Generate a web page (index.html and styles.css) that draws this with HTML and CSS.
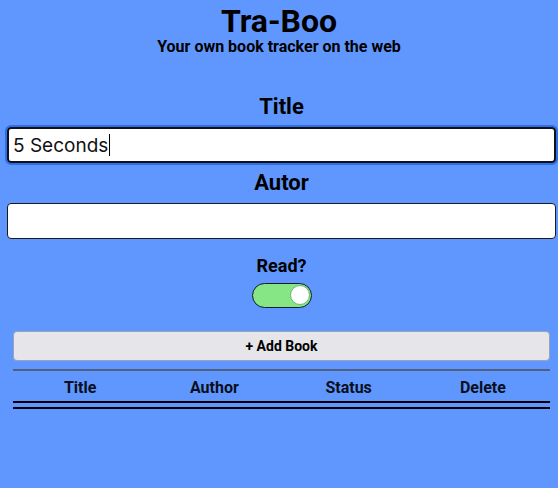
FILE: index.html
```html
<!DOCTYPE html>
<html>
<head>
<meta charset="utf-8">
<link rel="stylesheet" href="styles.css">
</head>
<body>
<header class="head">
  <h1 class="brand">Tra-Boo</h1>
  <p class="tagline">Your own book tracker on the web</p>
</header>
<form class="form">
  <label class="label">Title</label>
  <div class="field focused"><span class="value">5 Seconds</span><span class="caret"></span></div>
  <label class="label">Autor</label>
  <div class="field"></div>
  <label class="label small">Read?</label>
  <div class="toggle"><span class="knob"></span></div>
</form>
<div class="lower">
  <button class="add" type="button">+ Add Book</button>
  <div class="rule"></div>
  <div class="thead">
    <span>Title</span><span>Author</span><span>Status</span><span>Delete</span>
  </div>
  <div class="dbl"></div>
</div>
</body>
</html>
```

FILE: styles.css
```css
* { box-sizing: border-box; }
html, body { margin: 0; padding: 0; }
body {
  background: #6097ff;
  font-family: Roboto, "Liberation Sans", sans-serif;
  color: #000;
  width: 558px;
  height: 488px;
  overflow: hidden;
}
.head { text-align: center; padding-top: 4px; }
.brand { margin: 0; font-size: 32px; line-height: 34px; font-weight: 700; }
.tagline { margin: 0; font-size: 16px; line-height: 17px; font-weight: 700; }
.form { display: flex; flex-direction: column; align-items: center; padding: 0 2px 0 7px; margin-top: 39px; }
.label { font-size: 22px; font-weight: 700; line-height: 26px; }
.label.small { font-size: 18px; line-height: 22px; margin-top: 8px; }
.field {
  width: 100%;
  height: 36px;
  margin-top: 7px;
  margin-bottom: 8px;
  background: #fff;
  border: 1px solid #1a1a1a;
  border-radius: 4px;
  display: flex;
  align-items: center;
  padding-left: 5px;
}
.field.focused {
  border: 2px solid #111;
  outline: 2px solid #2b6ff0;
  padding-left: 4px;
  margin-bottom: 7px;
}
.value { font-family: Inter, Roboto, sans-serif; font-size: 19px; color: #111; }
.caret { width: 1px; height: 22px; background: #000; margin-left: 1px; }
.toggle {
  margin-top: 6px;
  width: 60px; height: 25px;
  border-radius: 13px;
  background: #86e585;
  border: 1.5px solid #0f1a33;
  position: relative;
}
.knob {
  position: absolute; right: 1px; top: 1px;
  width: 20px; height: 20px; border-radius: 50%;
  background: #fff;
  border: 1px solid #6bb86a;
}
.lower { padding: 0 8px 0 13px; margin-top: 23px; }
.add {
  display: block; width: 100%; height: 30px;
  background: #e6e5ea;
  border: 1px solid #9aa3b8;
  border-radius: 4px;
  font-family: Roboto, sans-serif;
  font-size: 14px; font-weight: 700; color: #000;
}
.rule { height: 2px; background: #4f5f80; margin-top: 8px; }
.thead { display: grid; grid-template-columns: repeat(4, 1fr); text-align: center; font-size: 16px; font-weight: 700; padding-top: 7px; height: 30px; color: #0a0f20; }
.dbl { height: 8px; border-top: 2px solid #000; border-bottom: 2px solid #000; }
```
